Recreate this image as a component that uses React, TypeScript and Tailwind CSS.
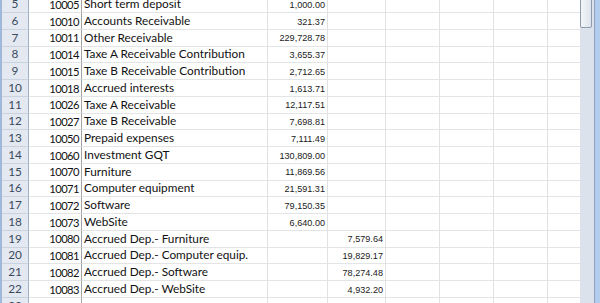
import React from "react";

type Row = { n: number; acc?: string; name?: string; c?: string; d?: string };

const rows: Row[] = [
  { n: 5, acc: "10005", name: "Short term deposit", c: "1,000.00" },
  { n: 6, acc: "10010", name: "Accounts Receivable", c: "321.37" },
  { n: 7, acc: "10011", name: "Other Receivable", c: "229,728.78" },
  { n: 8, acc: "10014", name: "Taxe A Receivable Contribution", c: "3,655.37" },
  { n: 9, acc: "10015", name: "Taxe B Receivable Contribution", c: "2,712.65" },
  { n: 10, acc: "10018", name: "Accrued interests", c: "1,613.71" },
  { n: 11, acc: "10026", name: "Taxe A Receivable", c: "12,117.51" },
  { n: 12, acc: "10027", name: "Taxe B Receivable", c: "7,698.81" },
  { n: 13, acc: "10050", name: "Prepaid expenses", c: "7,111.49" },
  { n: 14, acc: "10060", name: "Investment GQT", c: "130,809.00" },
  { n: 15, acc: "10070", name: "Furniture", c: "11,869.56" },
  { n: 16, acc: "10071", name: "Computer equipment", c: "21,591.31" },
  { n: 17, acc: "10072", name: "Software", c: "79,150.35" },
  { n: 18, acc: "10073", name: "WebSite", c: "6,640.00" },
  { n: 19, acc: "10080", name: "Accrued Dep.- Furniture", d: "7,579.64" },
  { n: 20, acc: "10081", name: "Accrued Dep.- Computer equip.", d: "19,829.17" },
  { n: 21, acc: "10082", name: "Accrued Dep.- Software", d: "78,274.48" },
  { n: 22, acc: "10083", name: "Accrued Dep.- WebSite", d: "4,932.20" },
  { n: 23 },
];

const txt = "font-['Lato',sans-serif] text-[11.8px] text-[#111]";
const accTxt = "font-['Lato',sans-serif] text-[11.2px] tracking-[-0.55px] text-[#111]";
const num = "font-['Liberation_Sans',Arial,sans-serif] text-[9.1px] text-[#1a1a1a]";
const cell = "h-full border-r border-[#dfe1e3] flex items-end pb-[2px] leading-none overflow-visible whitespace-nowrap";

export default function App() {
  return (
    <div className="w-[600px] h-[303px] overflow-hidden flex bg-white">
      <div className="w-[2px] h-full bg-[#9fb7d9]" />
      <div className="w-[578px] h-full overflow-hidden">
        <div className="-mt-[3.76px] flex flex-col">
          {rows.map((r) => (
            <div key={r.n} className="flex h-[16.76px] shrink-0">
              <div className="w-[27px] h-full bg-[#e4e9f1] border-r border-b border-r-[#9eb0c8] border-b-[#c9d3e0] flex items-end justify-center pb-[2px] leading-none font-['Lato',sans-serif] text-[11.8px] text-[#3a4a5e]">
                {r.n}
              </div>
              <div className={`w-[53px] border-b border-b-[#e3e4e6] border-r-[#a3a3a3] justify-end pr-[2px] ${cell} ${accTxt}`}>
                {r.acc}
              </div>
              <div className={`w-[186px] border-b border-b-[#e3e4e6] pl-[2px] ${cell} ${txt}`}>{r.name}</div>
              <div className={`w-[60px] border-b border-b-[#e3e4e6] justify-end pr-[2px] ${cell} ${num}`}>{r.c}</div>
              <div className={`w-[58px] border-b border-b-[#e3e4e6] justify-end pr-[2px] ${cell} ${num}`}>{r.d}</div>
              <div className={`w-[54px] border-b border-b-[#e3e4e6] ${cell}`} />
              <div className={`w-[54px] border-b border-b-[#e3e4e6] ${cell}`} />
              <div className={`w-[54px] border-b border-b-[#e3e4e6] ${cell}`} />
              <div className="w-[32px] h-full border-b border-b-[#e3e4e6]" />
            </div>
          ))}
        </div>
      </div>
      <div className="w-[14px] h-full bg-[#dbe2eb] flex flex-col">
        <div className="w-[12px] h-[32px] -mt-[4px] rounded-[2px] border border-[#8f9cb0] bg-gradient-to-r from-[#f3f5f8] to-[#dfe4ec]" />
      </div>
      <div className="w-[1px] h-full bg-[#8fa3bd]" />
      <div className="w-[5px] h-full bg-[#b2cdee]" />
    </div>
  );
}
